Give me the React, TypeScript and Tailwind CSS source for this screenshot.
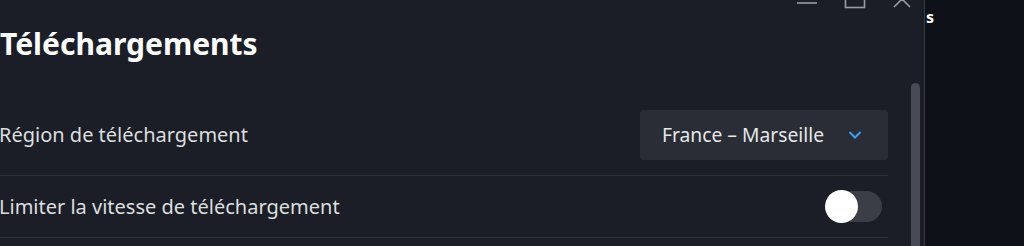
import React from "react";

export default function App() {
  return (
    <div className="flex h-[246px] w-[1024px] overflow-hidden bg-[#0e1117]" style={{ fontFamily: '"Noto Sans", "Open Sans", sans-serif' }}>
      <div className="relative w-[925px] shrink-0 border-r border-[#353a43] bg-[#1b1e26]">
        {/* window controls */}
        <div className="absolute right-[12px] top-[-10px] flex items-center gap-[26px] text-[#9a9ca1]">
          <svg width="22" height="20" viewBox="0 0 22 20"><line x1="1" y1="13" x2="21" y2="13" stroke="currentColor" strokeWidth="1.6" /></svg>
          <svg width="22" height="20" viewBox="0 0 22 20"><rect x="1.5" y="-2" width="19" height="19.5" fill="none" stroke="currentColor" strokeWidth="1.6" /></svg>
          <svg width="20" height="20" viewBox="0 0 20 20"><path d="M2 17 L10 9 L18 17" fill="none" stroke="currentColor" strokeWidth="1.6" /></svg>
        </div>
        {/* scrollbar */}
        <div className="absolute right-[4px] top-[83px] h-[200px] w-[9px] rounded-full bg-[#464b55]" />

        <div className="w-[888px] pt-[22px]">
          <h1 className="text-[30px] font-bold leading-[44px] text-white">Téléchargements</h1>
          <div className="mt-[44px] flex h-[50px] items-center justify-between">
            <span className="-ml-[1px] text-[20px] text-[#dcdedf]">Région de téléchargement</span>
            <button className="flex h-[50px] w-[248px] items-center justify-between rounded-[4px] bg-[#2a2d35] pl-[22px] pr-[26px] text-[19.25px] text-[#e6e7e8]">
              <span>France – Marseille</span>
              <svg width="14" height="10" viewBox="0 0 14 10"><path d="M1.5 2 L7 7.5 L12.5 2" fill="none" stroke="#3d9cf0" strokeWidth="2" /></svg>
            </button>
          </div>
          <div className="mt-[15px] h-px bg-[#2e323b]" />
          <div className="flex h-[61px] items-center justify-between">
            <span className="-ml-[1px] text-[20px] text-[#dcdedf]">Limiter la vitesse de téléchargement</span>
            <div className="relative mr-[6px] h-[31px] w-[57px]">
              <div className="absolute right-0 top-0 h-[31px] w-[47px] rounded-full bg-[#3b3e46]" />
              <div className="absolute left-0 top-[-1px] h-[33px] w-[33px] rounded-full bg-white" />
            </div>
          </div>
          <div className="h-px bg-[#2e323b]" />
        </div>
      </div>
      <div className="pl-[1px] pt-[7px] text-[16px] font-bold leading-[20px] text-white">s</div>
    </div>
  );
}
